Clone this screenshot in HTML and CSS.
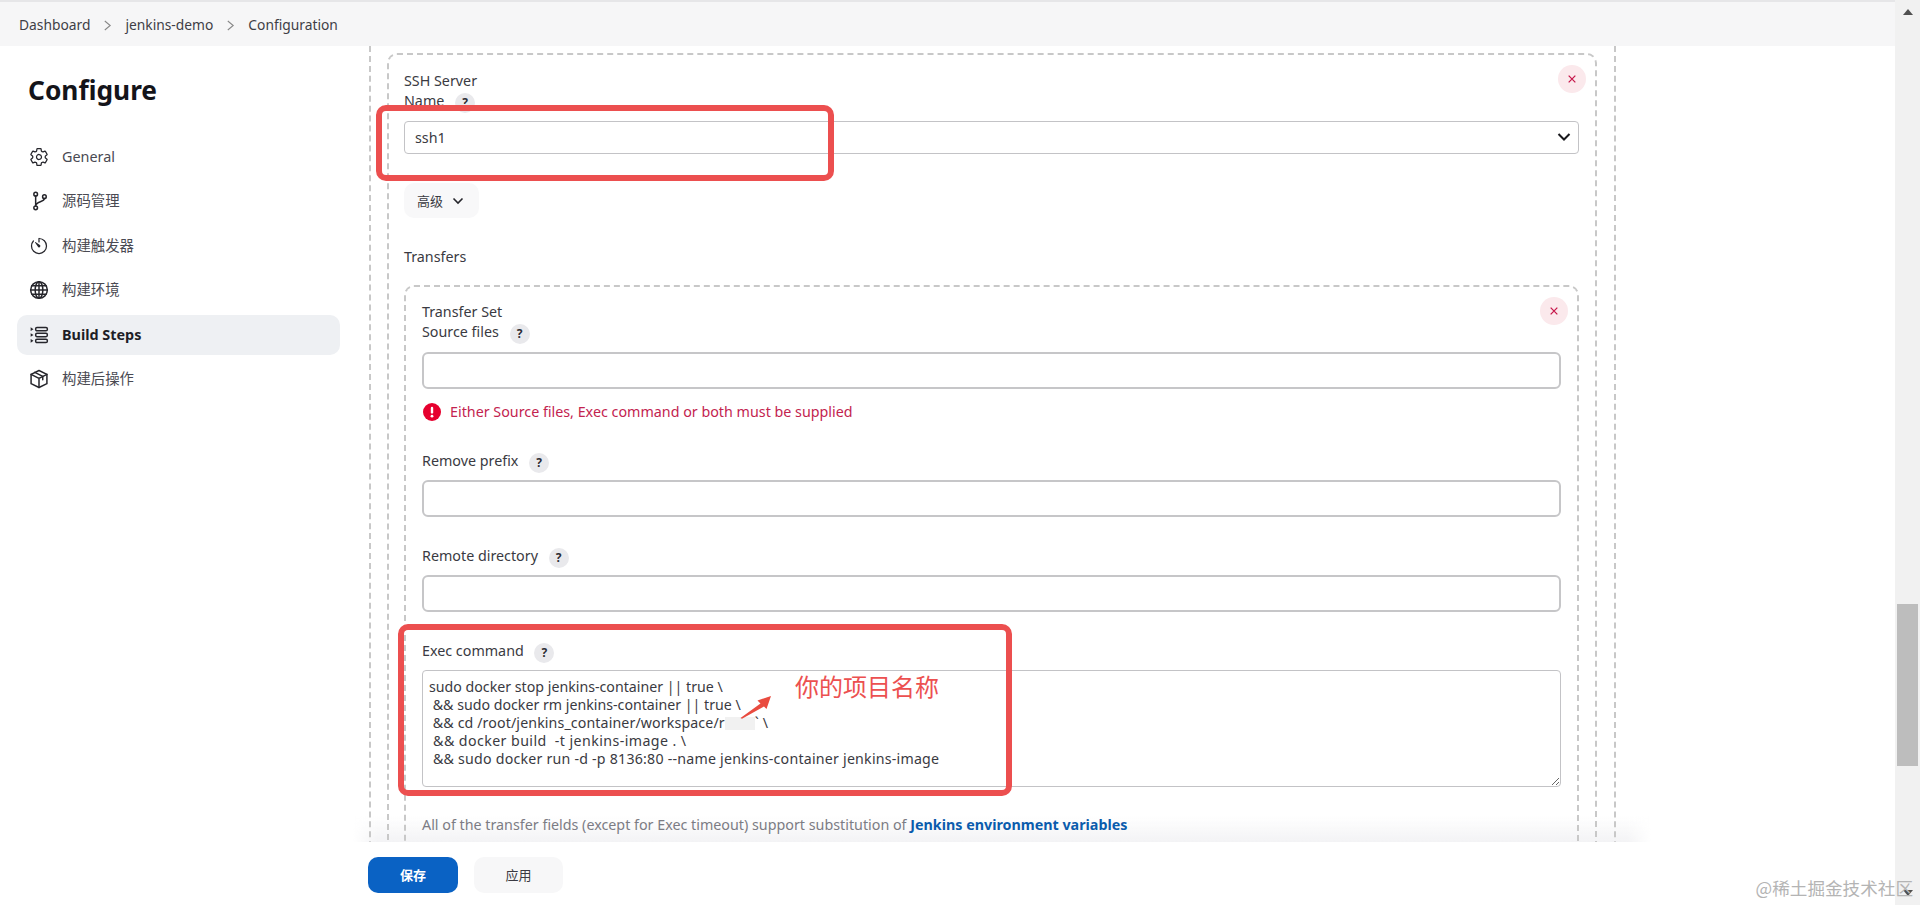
FILE: index.html
```html
<!DOCTYPE html>
<html lang="zh-CN">
<head>
<meta charset="utf-8">
<title>jenkins-demo Config</title>
<link rel="stylesheet" href="styles.css">
</head>
<body>
<div class="app">
  <div class="page">
    <nav class="breadcrumb">
      <span>Dashboard</span>
      <svg class="crumb-sep" viewBox="0 0 10 14"><path d="M2 2l6 5-6 5"/></svg>
      <span>jenkins-demo</span>
      <svg class="crumb-sep" viewBox="0 0 10 14"><path d="M2 2l6 5-6 5"/></svg>
      <span>Configuration</span>
    </nav>
    <div class="layout">
      <aside class="sidebar">
        <h1 class="title">Configure</h1>
        <ul class="side-list">
          <li class="side-item">
            <svg class="side-icon" viewBox="0 0 512 512"><path class="st32" d="M262.29 192.31a64 64 0 1057.4 57.4 64.13 64.13 0 00-57.4-57.4zM416.39 256a154.34 154.34 0 01-1.53 20.79l45.21 35.46a10.81 10.81 0 012.45 13.75l-42.77 74a10.81 10.81 0 01-13.14 4.59l-44.9-18.08a16.11 16.11 0 00-15.17 1.75A164.48 164.48 0 01325 400.8a15.94 15.94 0 00-8.82 12.14l-6.73 47.89a11.08 11.08 0 01-10.68 9.17h-85.54a11.11 11.11 0 01-10.69-8.87l-6.72-47.82a16.07 16.07 0 00-9-12.22 155.3 155.3 0 01-21.46-12.57 16 16 0 00-15.11-1.71l-44.89 18.07a10.81 10.81 0 01-13.14-4.58l-42.77-74a10.8 10.8 0 012.45-13.75l38.21-30a16.05 16.05 0 006-14.08c-.36-4.17-.58-8.33-.58-12.5s.21-8.27.58-12.35a16 16 0 00-6.07-13.94l-38.19-30A10.81 10.81 0 0149.48 186l42.77-74a10.81 10.81 0 0113.14-4.59l44.9 18.08a16.11 16.11 0 0015.17-1.75A164.48 164.48 0 01187 111.2a15.94 15.94 0 008.82-12.14l6.73-47.89A11.08 11.08 0 01213.23 42h85.54a11.11 11.11 0 0110.69 8.87l6.72 47.82a16.07 16.07 0 009 12.22 155.3 155.3 0 0121.46 12.57 16 16 0 0015.11 1.71l44.89-18.07a10.81 10.81 0 0113.14 4.58l42.77 74a10.8 10.8 0 01-2.45 13.75l-38.21 30a16.05 16.05 0 00-6.05 14.08c.33 4.14.55 8.3.55 12.47z"/></svg>
            <span>General</span>
          </li>
          <li class="side-item">
            <svg class="side-icon" viewBox="0 0 24 24"><g class="st2"><circle cx="8" cy="3.8" r="2.2"/><circle cx="8" cy="20.2" r="2.2"/><circle cx="18.5" cy="6.8" r="2.2"/><path d="M8 6v12M18.5 9c0 4.5-10.5 3.5-10.5 9"/></g></svg>
            <span>源码管理</span>
          </li>
          <li class="side-item">
            <svg class="side-icon" viewBox="0 0 512 512"><path class="st32" d="M112.91 128A191.85 191.85 0 0064 254c-1.18 106.35 85.65 193.8 192 194 106.2.2 192-85.83 192-192 0-104.54-83.55-189.61-187.5-192a4.36 4.36 0 00-4.5 4.37V152"/><path class="fillc" d="M233.38 278.63l-79-113a8.13 8.13 0 0111.32-11.32l113 79a32.5 32.5 0 01-37 53.34 33.21 33.21 0 01-8.32-8.02z"/></svg>
            <span>构建触发器</span>
          </li>
          <li class="side-item">
            <svg class="side-icon" viewBox="0 0 24 24"><g class="st2"><circle cx="12" cy="12" r="10"/><ellipse cx="12" cy="12" rx="4.6" ry="10"/><path d="M12 2v20M2 12h20M3.4 7h17.2M3.4 17h17.2"/></g></svg>
            <span>构建环境</span>
          </li>
          <li class="side-item is-active">
            <svg class="side-icon" viewBox="0 0 24 24"><g class="st2"><rect x="8" y="3" width="14" height="4" rx="1.6"/><rect x="8" y="10" width="14" height="4" rx="1.6"/><rect x="8" y="17" width="14" height="4" rx="1.6"/></g><path class="fillc" d="M2 2.8l3.4 2.2L2 7.2zM2 9.8l3.4 2.2L2 14.2zM2 16.8l3.4 2.2L2 21.2z"/></svg>
            <span>Build Steps</span>
          </li>
          <li class="side-item">
            <svg class="side-icon" viewBox="0 0 24 24"><g class="st2 joinr"><path d="M12 1.8l9.5 4.6v11.2L12 22.2l-9.5-4.6V6.4z"/><path d="M2.5 6.4l9.5 4.8 9.5-4.8M12 11.2v11"/><path d="M7 4l9.5 4.8v4"/></g></svg>
            <span>构建后操作</span>
          </li>
        </ul>
      </aside>
      <main class="main">
        <div class="scroller">
          <div class="outer">
            <section class="card">
              <button class="close" type="button" aria-label="close"><svg viewBox="0 0 12 12"><path d="M2 2l8 8M10 2l-8 8"/></svg></button>
              <div class="line">SSH Server</div>
              <div class="line">Name <span class="help name-help">?</span></div>
              <div class="select-wrap">
                <select class="select"><option>ssh1</option></select>
                <svg class="select-chev" viewBox="0 0 14 10"><path d="M1.5 2l5.5 5.5L12.500 2"/></svg>
              </div>
              <button class="adv" type="button">高级<svg viewBox="0 0 12 8"><path d="M1.500 1.500L6 6l4.500-4.500"/></svg></button>
              <div class="line transfers">Transfers</div>
              <section class="card inner">
                <button class="close" type="button" aria-label="close"><svg viewBox="0 0 12 12"><path d="M2 2l8 8M10 2l-8 8"/></svg></button>
                <div class="line">Transfer Set</div>
                <div class="line">Source files <span class="help">?</span></div>
                <input class="input source" type="text">
                <div class="error">
                  <svg class="err-icon" viewBox="0 0 18 18"><circle cx="9" cy="9" r="9"/><rect x="7.800" y="3.800" width="2.400" height="6.800" rx="1.200"/><circle class="err-dot" cx="9" cy="13.200" r="1.400"/></svg>
                  <span>Either Source files, Exec command or both must be supplied</span>
                </div>
                <div class="line field">Remove prefix <span class="help">?</span></div>
                <input class="input" type="text">
                <div class="line field">Remote directory <span class="help">?</span></div>
                <input class="input" type="text">
                <div class="line field">Exec command <span class="help">?</span></div>
                <div class="textarea"><span>sudo docker stop jenkins-container || true \</span>
<span> &amp;&amp; sudo docker rm jenkins-container || true \</span>
<span class="ls-2"> &amp;&amp; cd /root/jenkins_container/workspace/r<span class="redact"></span>` \</span>
<span class="ls-4"> &amp;&amp; docker build  -t jenkins-image . \</span>
<span class="ls-5"> &amp;&amp; sudo docker run -d -p 8136:80 --name jenkins-container jenkins-image</span></div>
                <p class="desc">All of the transfer fields (except for Exec timeout) support substitution of <a class="link" href="#">Jenkins environment variables</a></p>
              </section>
            </section>
          </div>
        </div>
        <div class="bar">
          <button class="btn primary" type="button">保存</button>
          <button class="btn" type="button">应用</button>
        </div>
      </main>
    </div>
  </div>
  <div class="scrollbar">
    <svg class="sb-arrow" viewBox="0 0 12 8"><path d="M6 1l5 6H1z"/></svg>
    <div class="sb-track"><div class="sb-thumb"></div></div>
    <svg class="sb-arrow" viewBox="0 0 12 8"><path d="M1 1h10L6 7z"/></svg>
  </div>
  <div class="mark mark-name"></div>
  <div class="mark mark-exec"></div>
  <div class="note">你的项目名称</div>
  <svg class="note-arrow" viewBox="0 0 32 24"><path d="M0.500 23L20.500 8.500 17.500 5.500 31 1 26.500 14 24 11.500 2 23.800z"/></svg>
  <div class="watermark">@稀土掘金技术社区</div>
</div>
</body>
</html>
```

FILE: styles.css
```css
* { box-sizing: border-box; }
html, body { margin: 0; height: 100%; overflow: hidden; }
body {
  background: #fff;
  color: #2c2c33;
  font-family: "Noto Sans", "Noto Sans CJK SC", sans-serif;
  font-size: 14.3px;
  line-height: 20px;
}
.app { position: relative; display: flex; width: 1920px; height: 905px; overflow: hidden; }
.page { flex: 1; min-width: 0; display: flex; flex-direction: column; }

.breadcrumb {
  flex: none;
  height: 46px;
  padding: 2px 0 0 19px;
  display: flex;
  align-items: center;
  gap: 13px;
  background: #f6f6f7;
  border-top: 2px solid #e6e6e8;
  color: #3e3e46;
  font-size: 13.8px;
}
.crumb-sep { width: 9px; height: 13px; fill: none; stroke: #888; stroke-width: 1.2; }

.layout { flex: 1; min-height: 0; display: flex; }
.sidebar { flex: none; width: 369px; padding: 0 0 0 17px; }
.title { margin: 26px 0 0 11px; font-size: 26.3px; line-height: 36px; font-weight: 700; color: #14141a; }
.side-list { list-style: none; margin: 28.5px 0 0; padding: 0; width: 323px; display: flex; flex-direction: column; gap: 4.6px; }
.side-item {
  height: 40px;
  padding-left: 12px;
  display: flex;
  align-items: center;
  gap: 13px;
  border-radius: 10px;
  color: #4a4a52;
  font-size: 14.4px;
}
.side-item.is-active { background: #eef0f3; color: #1e1e26; font-weight: 700; }
.side-icon { flex: none; width: 20px; height: 20px; color: #26262c; }
.st32 { fill: none; stroke: currentColor; stroke-width: 32; stroke-linecap: round; stroke-linejoin: round; }
.st2 { fill: none; stroke: currentColor; stroke-width: 1.800; stroke-linecap: round; }
.joinr { stroke-linejoin: round; }
.fillc { fill: currentColor; }

.main { position: relative; flex: none; width: 1264px; display: flex; flex-direction: column; }
.main::before {
  content: "";
  position: absolute;
  left: -16px;
  right: -18px;
  bottom: 63px;
  height: 26px;
  background: linear-gradient(to bottom, rgba(243, 243, 245, 0), #f3f3f5);
  -webkit-mask-image: linear-gradient(to right, transparent, #000 24px, #000 calc(100% - 24px), transparent);
  mask-image: linear-gradient(to right, transparent, #000 24px, #000 calc(100% - 24px), transparent);
}
.scroller { position: relative; flex: 1; min-height: 0; overflow: hidden; }
.outer {
  width: 1247px;
  padding: 7px 17px 0 16px;
  border-left: 2px dashed #c8c8c8;
  border-right: 2px dashed #c8c8c8;
}
.card {
  position: relative;
  padding: 16px 16px 24px 15px;
  border: 2px dashed #c8c8c8;
  border-radius: 10px;
}
.inner { margin-top: 18px; padding: 15px 16px 24px 16px; }
.line { height: 20px; color: #3a3a42; }
.help {
  display: inline-block;
  width: 20px;
  height: 20px;
  margin-left: 7px;
  border-radius: 50%;
  background: #e9e9ec;
  color: #2c2c33;
  font-size: 12px;
  font-weight: 700;
  line-height: 20px;
  text-align: center;
  vertical-align: -1px;
}
.close {
  position: absolute;
  top: 10px;
  right: 9px;
  width: 28px;
  height: 28px;
  padding: 0;
  border: 0;
  border-radius: 50%;
  background: #fbe9ec;
  display: flex;
  align-items: center;
  justify-content: center;
}
.close svg { width: 10px; height: 10px; fill: none; stroke: #c6164a; stroke-width: 1.500; }

.select-wrap { position: relative; margin-top: 10px; }
.select {
  display: block;
  width: 100%;
  height: 33px;
  padding: 0 10px;
  appearance: none;
  background: #fff;
  border: 1px solid #c3c3c6;
  border-radius: 4px;
  color: #3a3a42;
  font: inherit;
}
.select-chev {
  position: absolute;
  right: 8px;
  top: 11px;
  width: 14px;
  height: 10px;
  fill: none;
  stroke: #18181c;
  stroke-width: 2;
}
.adv {
  display: flex;
  align-items: center;
  gap: 9px;
  margin-top: 29px;
  width: 75px;
  height: 35px;
  padding: 0 0 0 13px;
  border: 0;
  border-radius: 10px;
  background: #f8f8f9;
  color: #3a3a42;
  font: inherit;
  font-size: 13px;
}
.adv svg { width: 12px; height: 8px; fill: none; stroke: #26262c; stroke-width: 1.600; }
.transfers { margin-top: 29px; }

.input {
  display: block;
  width: 100%;
  height: 37px;
  margin-top: 9px;
  border: 2px solid #c6c6c8;
  border-radius: 6px;
  background: #fff;
}
.input.source { margin-top: 10px; }
.error {
  display: flex;
  align-items: center;
  gap: 9px;
  margin-top: 13px;
  padding-left: 1px;
  height: 20px;
  color: #c3234f;
}
.err-icon { flex: none; width: 18px; height: 18px; fill: #e6002e; }
.err-icon rect, .err-dot { fill: #fff; }
.field { margin-top: 29px; }
.textarea {
  height: 117px;
  margin-top: 9px;
  padding: 7px 6px;
  overflow: auto;
  resize: vertical;
  border: 1px solid #c3c3c6;
  border-radius: 4px;
  background: #fff;
  color: #3a3a42;
  font-size: 14.2px;
  line-height: 18px;
  white-space: pre;
}
.ls-2 { letter-spacing: 0.12px; }
.ls-4 { letter-spacing: 0.42px; }
.ls-5 { letter-spacing: 0.22px; }
.redact { display: inline-block; width: 30px; height: 13px; vertical-align: -2px; background: #f1f1f1; }
.desc { margin: 28px 0 0; color: #7c7c84; }
.link { color: #0b5cad; font-weight: 700; text-decoration: none; }

.bar {
  position: relative;
  flex: none;
  height: 63px;
  margin-left: -1px;
  padding: 15px 0 0 0;
  display: flex;
  gap: 16px;
  background: #fff;
}
.btn {
  width: 89px;
  height: 36px;
  padding: 0;
  border: 0;
  border-radius: 10px;
  background: #f7f7f8;
  color: #3a3a42;
  font: inherit;
  font-size: 13px;
}
.btn.primary { width: 90px; background: #0a62c4; color: #fff; font-weight: 700; }

.scrollbar {
  flex: none;
  width: 25px;
  padding: 8px 2px 8px;
  display: flex;
  flex-direction: column;
  align-items: center;
  background: #f1f1f1;
}
.sb-arrow { flex: none; width: 12px; height: 8px; fill: #505050; }
.sb-track { flex: 1; width: 100%; padding-top: 588px; }
.sb-thumb { height: 162px; background: #bdbdbd; }

.mark { position: absolute; border: 6px solid #ec4f4f; border-radius: 10px; }
.mark-name { left: 376px; top: 105px; width: 458px; height: 76px; }
.mark-exec { left: 398px; top: 624px; width: 614px; height: 172px; }
.note {
  position: absolute;
  left: 795px;
  top: 670px;
  font-size: 24px;
  line-height: 34px;
  color: #ec5050;
}
.note-arrow { position: absolute; left: 740px; top: 695px; width: 32px; height: 24px; fill: #e94b3f; }
.watermark {
  position: absolute;
  right: 7px;
  bottom: 5px;
  font-size: 17.6px;
  line-height: 24px;
  color: #b4b4b4;
  font-family: "Noto Sans CJK SC", sans-serif;
}
```
